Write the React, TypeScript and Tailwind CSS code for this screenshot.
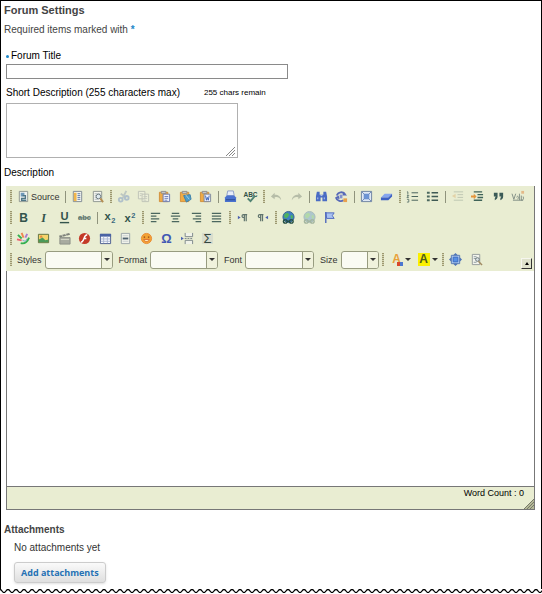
import type { ReactNode } from "react";

type IconName = keyof typeof icons;

const page = (
  <>
    <path d="M2.5 1.5h9v11h-9z" fill="#f4f5ee" stroke="#8b948f" />
    <path d="M4 4h6M4 6h6M4 8h6M4 10h4" stroke="#b3bcc0" />
  </>
);

const clipboard = (
  <>
    <path d="M1.5 2.5h9v10h-9z" fill="#efab45" stroke="#d18f3a" />
    <path d="M3.5 1.5h5v2h-5z" fill="#d9d9d9" stroke="#8c8c8c" />
  </>
);

const globe = (
  <>
    <circle cx="7" cy="6.500" r="6" fill="#3f7fc4" stroke="#35658c" />
    <path d="M3 3l3-1 2 2-2 3-2 1-2-2zM9 5l2-1 1 3-2 2z" fill="#4fb35f" />
    <path d="M1.500 11a2 2 0 0 1 2-1.500h1a2 2 0 0 1 0 3.500h-1a2 2 0 0 1-2-2zM8 11a2 2 0 0 1 2-1.500h1a2 2 0 0 1 0 3.500h-1a2 2 0 0 1-2-2zM5 11h4" fill="none" stroke="#234d42" strokeWidth="1.500" />
  </>
);

const icons = {
  source: (
    <>
      <path d="M2.500 1.500h9v11h-9z" fill="#eef1ee" stroke="#8b948f" />
      <path d="M4 3h4v4H4z" fill="#6d97b8" />
      <path d="M6 6h3v3H5v2h5" fill="none" stroke="#4f7686" strokeWidth="1.500" />
    </>
  ),
  templates: (
    <>
      <path d="M2.5 1.5h9v11h-9z" fill="#f4f5ee" stroke="#7c8893" />
      <path d="M3 3h3v9H3z" fill="#f0b64c" />
      <path d="M7 4h3M7 6h3M7 8h3M7 10h3" stroke="#5575a6" />
    </>
  ),
  preview: (
    <>
      {page}
      <circle cx="8" cy="7" r="2.5" fill="#dfeaf0" stroke="#68777d" />
      <path d="M10 9l3 4" stroke="#b58e52" strokeWidth="2" />
    </>
  ),
  cut: (
    <g opacity=".4">
      <path d="M10 1L6 9M4 4l6 4" stroke="#7f93ab" strokeWidth="2" />
      <circle cx="4" cy="10.500" r="2" fill="none" stroke="#5c7fc0" strokeWidth="2" />
      <circle cx="10.500" cy="8.500" r="2" fill="none" stroke="#5c7fc0" strokeWidth="2" />
    </g>
  ),
  copy: (
    <g opacity=".45">
      <path d="M1.5 1.5h7v8h-7zM5.500 4.500h7v8h-7z" fill="#f1f2e4" stroke="#8b9096" />
      <path d="M3 4h3M3 6h2M7 7h4M7 9h4M7 11h3" stroke="#9aa0a5" />
    </g>
  ),
  paste: (
    <>
      {clipboard}
      <path d="M5.500 4.500h7v8h-7z" fill="#eef1fb" stroke="#6a79ae" />
      <path d="M7 7h4M7 9h4M7 11h3" stroke="#6e80ba" />
    </>
  ),
  pasteText: (
    <>
      {clipboard}
      <path d="M5 6l7-1 1 5-5 3z" fill="#4d9cc8" stroke="#3d7fa9" />
      <path d="M7 5l4 5" stroke="#9fd1e8" />
    </>
  ),
  pasteWord: (
    <>
      {clipboard}
      <path d="M5.500 4.500h7v8h-7z" fill="#eef1fb" stroke="#7c8698" />
      <path d="M7 6l1 5 1-3 1 3 1-5" fill="none" stroke="#3a62b5" />
    </>
  ),
  print: (
    <>
      <path d="M4 1h6l1 5H3z" fill="#e6ecf8" stroke="#8a9dc8" />
      <path d="M1 8l2-2h8l2 2v5H1z" fill="#4a72cf" />
      <path d="M2 10.500h10" stroke="#27478f" />
    </>
  ),
  spell: (
    <>
      <text x="7" y="7" textAnchor="middle" fontSize="7" fontWeight="bold" fill="#2f5148">ABC</text>
      <path d="M4 9l3 3 5-6" fill="none" stroke="#4f8272" strokeWidth="2" />
    </>
  ),
  undo: <path d="M5 3L1 7l4 3V8c3-1 5 0 7 3 0-4-3-6-7-6z" fill="#b6bda8" />,
  redo: <path d="M9 3l4 4-4 3V8c-3-1-5 0-7 3 0-4 3-6 7-6z" fill="#b6bda8" />,
  find: (
    <>
      <path d="M2 2h3v3h4V2h3l1 5v5H8V8H6v4H1V7z" fill="#4a6cc4" />
      <path d="M3 8v2M10 8v2M6 6h2" stroke="#c3d0f3" />
    </>
  ),
  replace: (
    <>
      <path d="M2 6c1-4 7-5 9-1M1 8c1 4 6 5 8 3" fill="none" stroke="#5769b8" strokeWidth="2" />
      <path d="M9 2l4 4H8zM4 6L0 8l5 2z" fill="#5769b8" />
      <path d="M5 5h3v4H5z" fill="#8391cf" />
      <path d="M9 9h4v4H9z" fill="#e8a04d" />
    </>
  ),
  selectAll: (
    <>
      <path d="M1.500 1.500h11v11h-11z" fill="#dfe8f5" stroke="#6a7f9f" />
      <path d="M4 4h6v6H4z" fill="#6c93d4" />
      <path d="M2 2l3 3M12 2L9 5M2 12l3-3M12 12L9 9" stroke="#6c87b8" />
    </>
  ),
  eraser: (
    <>
      <path d="M5 4h8L9 8H1z" fill="#86a5ee" />
      <path d="M1 8h8l4-4v3l-4 4H1z" fill="#3e61c4" />
    </>
  ),
  numbered: (
    <>
      <path d="M6 3h7M6 7h7M6 11h7" stroke="#3f5a54" />
      <path d="M1 2h1v3M1 6h2l-2 2h2M1 10h2v3H1" fill="none" stroke="#60776f" />
    </>
  ),
  bulleted: (
    <>
      <path d="M6 3h7M6 7h7M6 11h7" stroke="#3f5a54" strokeWidth="1.5" />
      <path d="M1 2h3v2H1zM1 6h3v2H1zM1 10h3v2H1z" fill="#4c685f" />
    </>
  ),
  outdent: (
    <g opacity=".35">
      <path d="M3 2h10M7 5h6M7 8h6M3 11h10" stroke="#6b7c76" />
      <path d="M5 4v5L1 6.500z" fill="#d9a25a" />
    </g>
  ),
  indent: (
    <>
      <path d="M3 2h9M7 5h6M7 8h6M3 11h9" stroke="#3f6358" strokeWidth="1.500" />
      <path d="M0 6h3V4l3 3-3 3V8H0z" fill="#e4953c" />
    </>
  ),
  quote: <path d="M2 3h4v4c0 2-1 3-3 4V9l1-2H2zM8 3h4v4c0 2-1 3-3 4V9l1-2H8z" fill="#3b5b57" />,
  div: (
    <>
      <path d="M0 4l2 6 2-6M5 8c1-3 3 0 1 2M8 4v7M10 6v5c2 0 3-1 2-4M1 11h11" fill="none" stroke="#7e8d83" />
      <path d="M10 1h3v3h-3z" fill="#e4b988" />
    </>
  ),
  bold: <text x="7" y="12" textAnchor="middle" fontSize="13" fontWeight="bold" fill="#33544c">B</text>,
  italic: <text x="7" y="12" textAnchor="middle" fontSize="13" fontWeight="bold" fontStyle="italic" fontFamily="Liberation Serif, serif" fill="#33544c">I</text>,
  underline: (
    <>
      <text x="7" y="10" textAnchor="middle" fontSize="12" fontWeight="bold" fill="#33544c">U</text>
      <path d="M2 12.500h10" stroke="#33544c" strokeWidth="1.500" />
    </>
  ),
  strike: (
    <>
      <text x="7" y="10" textAnchor="middle" fontSize="8" fontWeight="bold" fill="#667b74">abc</text>
      <path d="M0 7.500h14" stroke="#566d66" />
    </>
  ),
  subscript: (
    <>
      <text x="5" y="10" textAnchor="middle" fontSize="12" fontWeight="bold" fill="#33544c">x</text>
      <text x="11" y="13" textAnchor="middle" fontSize="8" fontWeight="bold" fill="#3c6a80">2</text>
    </>
  ),
  superscript: (
    <>
      <text x="5" y="12" textAnchor="middle" fontSize="12" fontWeight="bold" fill="#33544c">x</text>
      <text x="11" y="7" textAnchor="middle" fontSize="8" fontWeight="bold" fill="#3c6a80">2</text>
    </>
  ),
  left: <path d="M2 2.500h10M2 5.500h6M2 8.500h9M2 11.500h6" stroke="#4b675f" strokeWidth="1.300" />,
  center: <path d="M3 2.500h8M2 5.500h10M4 8.500h6M3 11.500h8" stroke="#4b675f" strokeWidth="1.300" />,
  right: <path d="M2 2.500h10M6 5.500h6M3 8.500h9M6 11.500h6" stroke="#4b675f" strokeWidth="1.300" />,
  justify: <path d="M2 2.500h10M2 5.500h10M2 8.500h10M2 11.500h10" stroke="#4b675f" strokeWidth="1.300" />,
  ltr: (
    <>
      <path d="M12 4H8a1.500 1.500 0 0 0 0 3h1M9 4v7M11 4v7" fill="none" stroke="#60746d" strokeWidth="1.300" />
      <path d="M2 5l3 2-3 2z" fill="#4d62b0" />
    </>
  ),
  rtl: (
    <>
      <path d="M8 4H4a1.500 1.500 0 0 0 0 3h1M5 4v7M7 4v7" fill="none" stroke="#60746d" strokeWidth="1.300" />
      <path d="M13 5l-3 2 3 2z" fill="#4d62b0" />
    </>
  ),
  link: globe,
  unlink: <g opacity=".35">{globe}</g>,
  anchor: (
    <>
      <path d="M3 2h9l-2 3 2 3H4z" fill="#a9c2f2" stroke="#4f69bd" />
      <path d="M3 1v12" stroke="#4f69bd" strokeWidth="1.500" />
    </>
  ),
  effects: (
    <>
      <path d="M1 3l4 4" stroke="#35b04f" strokeWidth="2" />
      <path d="M5 1l2 5" stroke="#f0874f" strokeWidth="2" />
      <path d="M11 2L9 6" stroke="#a97cd0" strokeWidth="2" />
      <path d="M0 8l5 1" stroke="#ee6070" strokeWidth="2" />
      <path d="M4 12c4 1 7-1 9-6" fill="none" stroke="#35b04f" strokeWidth="2" />
      <path d="M6 9l3 1 2-3" fill="none" stroke="#7fa4d1" />
    </>
  ),
  image: (
    <>
      <path d="M1.500 2.500h11v9h-11z" fill="#f5d469" stroke="#5a6d3c" />
      <path d="M2 8l4-2 3 3 3-1v3H2z" fill="#4b9a58" />
      <circle cx="4.500" cy="5" r="1.300" fill="#e88a40" />
    </>
  ),
  media: (
    <>
      <path d="M2 6h11v7H2z" fill="#a8aba0" stroke="#8d9188" />
      <path d="M1 4l11-3 1 2-11 3z" fill="#7d8179" />
      <path d="M4 3l1 2M8 2l1 2M3 8h9" stroke="#d9dccb" />
    </>
  ),
  flash: (
    <>
      <circle cx="7" cy="7" r="6" fill="#c43a28" />
      <path d="M10 3C7 3 7 6 6 8s-1 3-3 3M6 7h3" fill="none" stroke="#fff" strokeWidth="1.500" />
    </>
  ),
  table: (
    <>
      <path d="M1.500 2.500h11v10h-11z" fill="#f7f9fc" stroke="#44578b" />
      <path d="M1 2h12v3H1z" fill="#4a63a4" />
      <path d="M2 7.500h10M2 10h10M5 5v7M9 5v7" stroke="#a9b5d2" />
    </>
  ),
  rule: (
    <>
      <path d="M2.500 1.500h9v11h-9z" fill="#f0f2ea" stroke="#99a3a8" />
      <path d="M4 7h6" stroke="#4d616f" strokeWidth="2" />
      <path d="M4 4h6M4 10h6" stroke="#c9cfd1" />
    </>
  ),
  smiley: (
    <>
      <circle cx="7" cy="7" r="5.500" fill="#f3a233" stroke="#e88a35" />
      <path d="M4 5.500h1.500M8.500 5.500H10" stroke="#8e4717" strokeWidth="1.500" />
      <path d="M4 8c1 3 5 3 6 0z" fill="#fff0c0" stroke="#d9692a" />
    </>
  ),
  omega: <text x="7" y="12" textAnchor="middle" fontSize="14" fontWeight="bold" fill="#4159b4">Ω</text>,
  pageBreak: (
    <>
      <path d="M4.500 1v4h8V1M4.500 13V9h8v4" fill="#f0f2e8" stroke="#7a8588" />
      <path d="M4 7h9" stroke="#7a8588" strokeDasharray="2 1" />
      <path d="M0 5l3 2-3 2z" fill="#4c64b2" />
    </>
  ),
  sigma: (
    <>
      <path d="M1 1h12v12H1z" fill="#d9ddcd" />
      <text x="7" y="12" textAnchor="middle" fontSize="14" fill="#344740">Σ</text>
    </>
  ),
  maximize: (
    <>
      <path d="M7 0l3 3H4zM7 14l3-3H4zM0 7l3-3v6zM14 7l-3-3v6z" fill="#4d74b8" />
      <path d="M2.500 2.500h9v9h-9z" fill="#a9c4ed" stroke="#5779b0" />
      <path d="M4.500 4.500h5v5h-5z" fill="#5790e4" stroke="#396bc0" />
    </>
  ),
  blocks: (
    <>
      <path d="M2.500 1.500h8v11h-8z" fill="#f3f4ed" stroke="#92999b" />
      <path d="M4 4h3M4 6h5M4 10h3" stroke="#8b999f" />
      <circle cx="8" cy="7" r="2" fill="#dae2e4" stroke="#687578" />
      <path d="M9 9l4 4" stroke="#a18b62" strokeWidth="1.500" />
    </>
  ),
};

function Icon({ name }: { name: IconName }) {
  return (
    <svg viewBox="0 0 14 14" className="h-[13px] w-[13px] shrink-0 overflow-visible" aria-hidden="true">
      {icons[name]}
    </svg>
  );
}

function Grip() {
  return (
    <span className="flex w-[5px] shrink-0 justify-center">
      <span className="h-[13px] w-0.5 bg-[repeating-linear-gradient(#9c9870_0_1px,#d3d3b2_1px_2px)]" />
    </span>
  );
}

function Separator() {
  return (
    <span className="flex w-1 shrink-0 justify-center">
      <span className="h-3 w-px bg-[#8f937c]" />
    </span>
  );
}

function Group({ width, names }: { width: string; names: IconName[] }) {
  return (
    <div className={`flex shrink-0 ${width}`}>
      {names.map((name) => (
        <button key={name} type="button" aria-label={name} className="flex h-5 flex-1 items-center justify-center">
          <Icon name={name} />
        </button>
      ))}
    </div>
  );
}

function Row({ children }: { children: ReactNode }) {
  return <div className="flex h-[21px] items-center">{children}</div>;
}

function Caret() {
  return <span className="border-x-[3px] border-t-[3px] border-x-transparent border-t-[#333]" />;
}

function Combo({ label, width }: { label: string; width: string }) {
  return (
    <label className="flex shrink-0 items-center gap-[3px] pl-1">
      {label}
      <span className={`relative h-[18px] ${width}`}>
        <select className="block h-full w-full appearance-none rounded-[3px] border border-[#989c80] bg-[#fafbf3]">
          <option />
        </select>
        <span className="pointer-events-none absolute inset-y-px right-px flex w-[11px] items-center justify-center rounded-r-[2px] border-l border-[#989c80] bg-[#f0f2dc]">
          <Caret />
        </span>
      </span>
    </label>
  );
}

function ColorButton({ label, className, children }: { label: string; className: string; children?: ReactNode }) {
  return (
    <button type="button" aria-label={label} className="flex w-[26px] shrink-0 items-center justify-center gap-0.5">
      <span className={`relative h-[13px] w-3 text-[12px] leading-[13px] font-bold ${className}`}>
        A{children}
      </span>
      <Caret />
    </button>
  );
}

function TornEdge() {
  return (
    <svg className="block h-1 w-full" aria-hidden="true">
      <defs>
        <pattern id="wave" width="8" height="4" patternUnits="userSpaceOnUse">
          <path d="M-2 2Q0 -1 2 2T6 2T10 2" fill="none" stroke="#000" strokeWidth="1.300" />
        </pattern>
      </defs>
      <rect width="100%" height="4" fill="url(#wave)" />
    </svg>
  );
}

export default function App() {
  return (
    <div className="bg-white font-['Liberation_Sans',Arial,sans-serif] text-[10px] leading-[14px] text-black">
      <main className="border-x border-t border-black pt-px pr-1.5 pb-1.5 pl-[3px]">
        <h1 className="text-[11px] leading-4 font-bold text-[#444]">Forum Settings</h1>
        <p className="mt-[5px] text-[#444]">
          Required items marked with <span className="font-bold text-[#1c87c9]">*</span>
        </p>

        <div className="mt-3 pl-0.5">
          <label htmlFor="title" className="flex items-center gap-0.5">
            <span className="h-[3px] w-[3px] rounded-full bg-[#1c87c9]" />
            Forum Title
          </label>
          <input id="title" className="mt-px block h-[15px] w-[282px] max-w-full border border-[#8a8a8a] px-1" />
          <div className="mt-[7px] flex items-center gap-6">
            <label htmlFor="short">Short Description (255 characters max)</label>
            <span className="text-[8px]">255 chars remain</span>
          </div>
          <div className="relative mt-[3px] w-[232px] max-w-full">
            <textarea id="short" className="block h-[55px] w-full resize-none border border-[#b0b0b0] px-1" />
            <svg viewBox="0 0 10 10" className="pointer-events-none absolute right-[3px] bottom-0.5 h-2.5 w-2.5" aria-hidden="true">
              <path d="M1 10l9-9M4 10l6-6M7 10l3-3" stroke="#888" />
            </svg>
          </div>
        </div>

        <label htmlFor="body" className="mt-2 block">Description</label>
        <div className="mt-1.5 ml-0.5 border-r border-[#777]">
          <div className="relative bg-[#e9edd2] pb-px pl-0.5 text-[9px] text-[#333]">
            <Row>
              <Grip />
              <button type="button" className="flex h-5 w-[50px] shrink-0 items-center gap-px pl-1">
                <Icon name="source" />
                Source
              </button>
              <Separator />
              <Group width="w-[41px]" names={["templates", "preview"]} />
              <Grip />
              <Group width="w-[103px]" names={["cut", "copy", "paste", "pasteText", "pasteWord"]} />
              <Separator />
              <Group width="w-[41px]" names={["print", "spell"]} />
              <Grip />
              <Group width="w-[41px]" names={["undo", "redo"]} />
              <Separator />
              <Group width="w-[41px]" names={["find", "replace"]} />
              <Separator />
              <Group width="w-[41px]" names={["selectAll", "eraser"]} />
              <Grip />
              <Group width="w-[41px]" names={["numbered", "bulleted"]} />
              <Separator />
              <Group width="w-[82px]" names={["outdent", "indent", "quote", "div"]} />
            </Row>
            <Row>
              <Grip />
              <Group width="w-[82px]" names={["bold", "italic", "underline", "strike"]} />
              <Separator />
              <Group width="w-[41px]" names={["subscript", "superscript"]} />
              <Grip />
              <Group width="w-[82px]" names={["left", "center", "right", "justify"]} />
              <Grip />
              <Group width="w-[41px]" names={["ltr", "rtl"]} />
              <Grip />
              <Group width="w-[62px]" names={["link", "unlink", "anchor"]} />
            </Row>
            <Row>
              <Grip />
              <Group
                width="w-[205px]"
                names={["effects", "image", "media", "flash", "table", "rule", "smiley", "omega", "pageBreak", "sigma"]}
              />
            </Row>
            <Row>
              <Grip />
              <div className="flex shrink-0 gap-0.5 pr-0.5">
                <Combo label="Styles" width="w-[68px]" />
                <Combo label="Format" width="w-[68px]" />
                <Combo label="Font" width="w-[69px]" />
                <Combo label="Size" width="w-[38px]" />
              </div>
              <Grip />
              <div className="flex shrink-0 gap-px pl-0.5">
                <ColorButton label="Text color" className="text-[#e8a13a]">
                  <span className="absolute right-0 bottom-0 h-1 w-1.5 border-l-[3px] border-[#d9482b] bg-[#4c77d0]" />
                </ColorButton>
                <ColorButton label="Background color" className="bg-[#fbf000] text-[#4c5a1c]" />
              </div>
              <Grip />
              <Group width="w-[41px]" names={["maximize", "blocks"]} />
            </Row>
            <button
              type="button"
              aria-label="Collapse toolbar"
              className="absolute right-0.5 bottom-0.5 flex h-[11px] w-[11px] items-center justify-center border border-[#f6f6ee] border-r-[#333] border-b-[#333] bg-[#dfe2cc]"
            >
              <span className="border-x-2 border-b-[3px] border-x-transparent border-b-black" />
            </button>
          </div>
          <textarea id="body" className="block h-[215px] w-full resize-none border-l border-[#777] p-2" />
          <div className="relative h-6 border-y border-l border-[#777] bg-[#e9edd2] pr-2.5 text-right text-[9px] leading-3">
            Word Count : 0
            <svg viewBox="0 0 10 10" className="absolute right-0 bottom-0 h-2.5 w-2.5" aria-hidden="true">
              <path d="M0 10L10 0v10z" fill="#b5b998" />
              <path d="M0 10L10 0M3 10l7-7M6 10l4-4" stroke="#77796a" />
            </svg>
          </div>
        </div>

        <section className="mt-[13px] text-[#333]">
          <h2 className="font-bold text-[#444]">Attachments</h2>
          <div className="mt-1 pl-2.5">
            <p>No attachments yet</p>
            <button
              type="button"
              className="mt-[7px] block h-[21px] rounded-[3px] border border-[#ccc] bg-linear-to-b from-[#fafafa] to-[#dfdfdf] px-1.5 font-['Open_Sans',sans-serif] text-[9px] font-bold text-[#2571b4] shadow-sm"
            >
              Add attachments
            </button>
          </div>
        </section>
      </main>
      <TornEdge />
    </div>
  );
}
